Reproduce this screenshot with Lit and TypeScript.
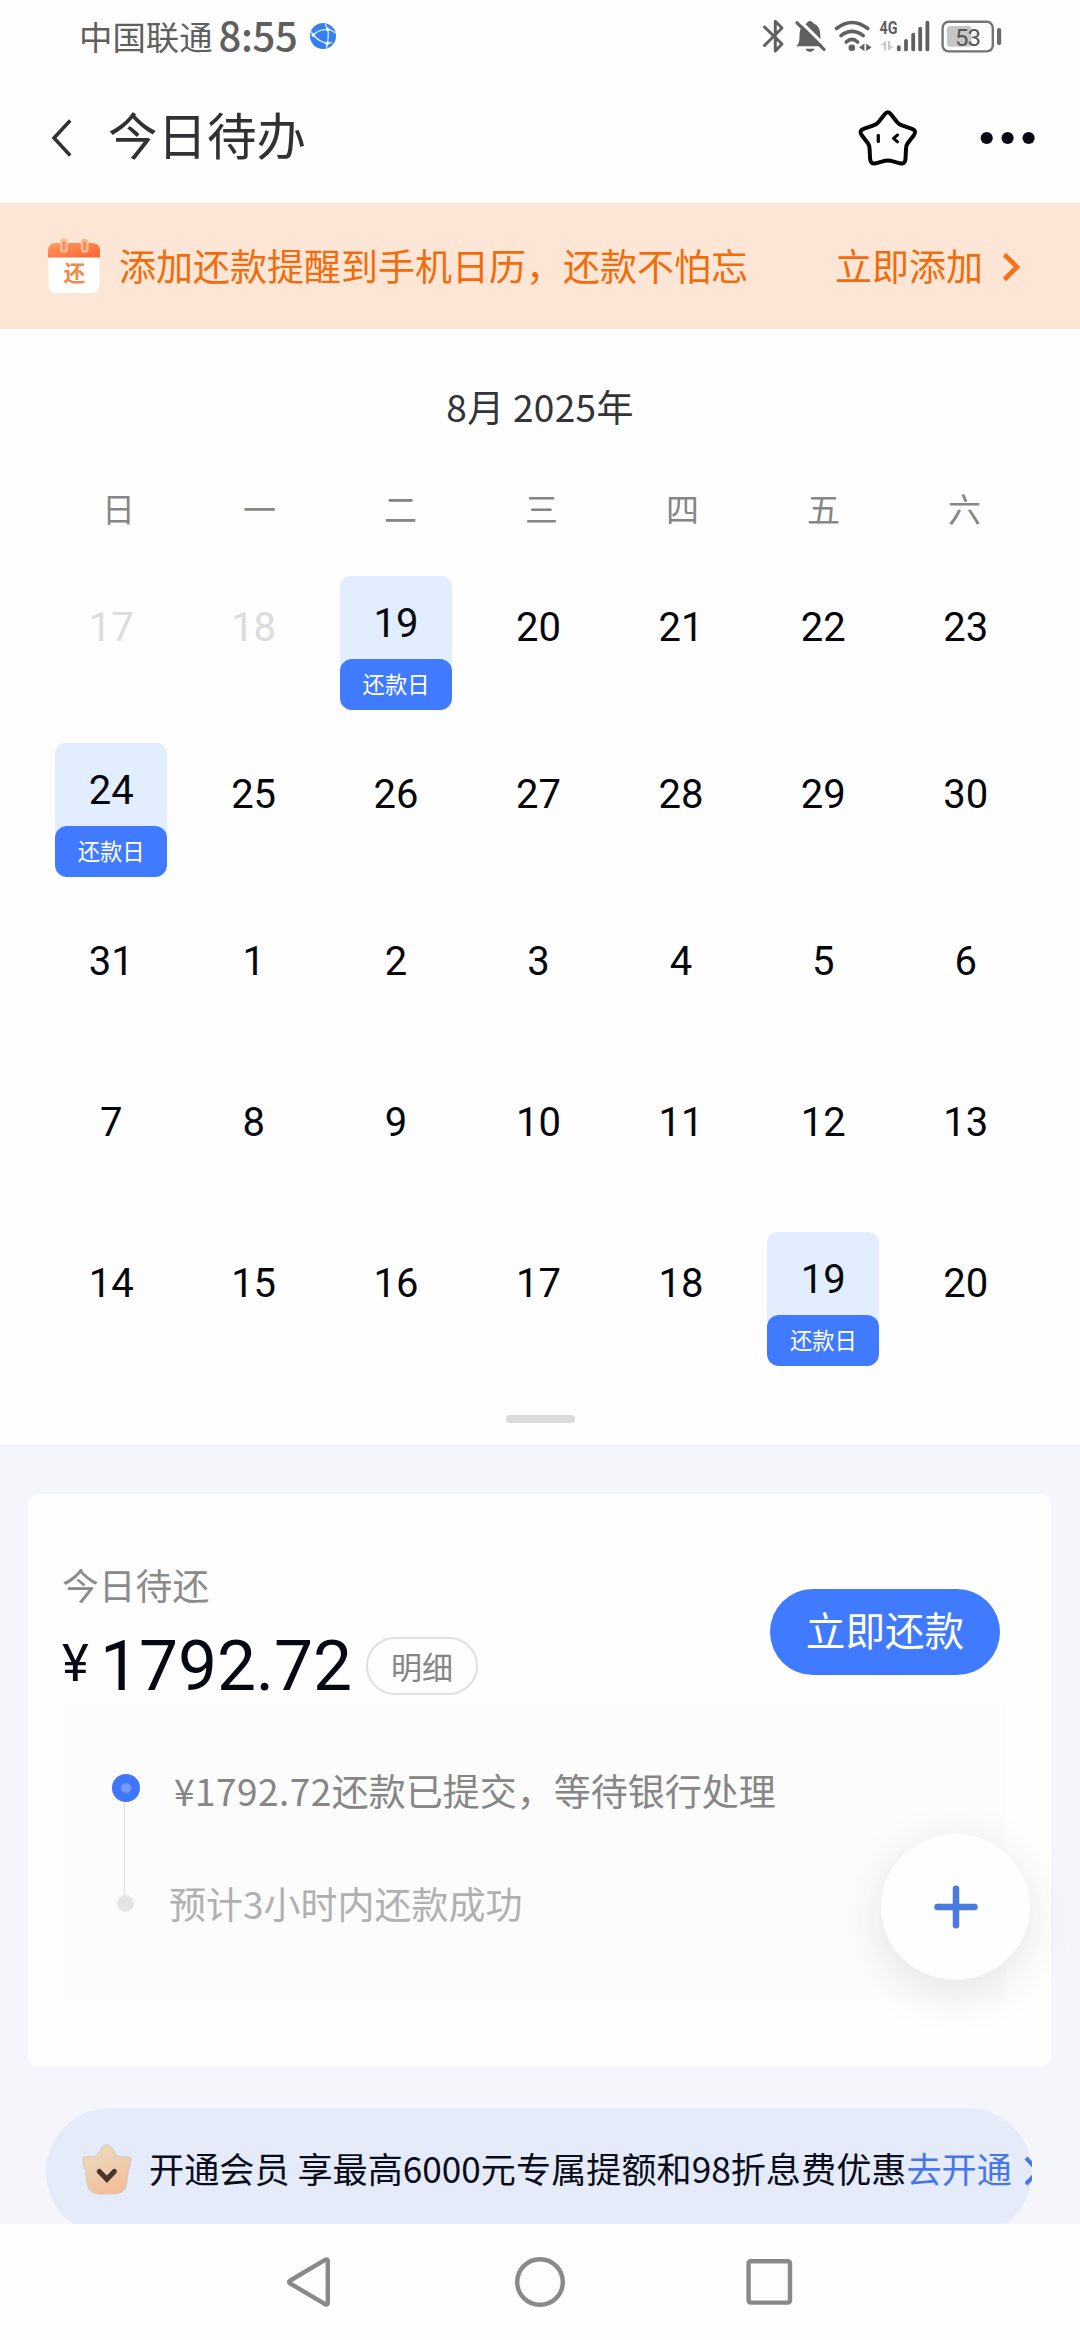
import { LitElement, html, css, svg } from "lit";
import { customElement, property } from "lit/decorators.js";
import { classMap } from "lit/directives/class-map.js";

interface Day {
  n: number;
  muted?: boolean;
  due?: boolean;
}

const WEEKDAYS = ["日", "一", "二", "三", "四", "五", "六"];

const WEEKS: Day[][] = [
  [{ n: 17, muted: true }, { n: 18, muted: true }, { n: 19, due: true }, { n: 20 }, { n: 21 }, { n: 22 }, { n: 23 }],
  [{ n: 24, due: true }, { n: 25 }, { n: 26 }, { n: 27 }, { n: 28 }, { n: 29 }, { n: 30 }],
  [{ n: 31 }, { n: 1 }, { n: 2 }, { n: 3 }, { n: 4 }, { n: 5 }, { n: 6 }],
  [{ n: 7 }, { n: 8 }, { n: 9 }, { n: 10 }, { n: 11 }, { n: 12 }, { n: 13 }],
  [{ n: 14 }, { n: 15 }, { n: 16 }, { n: 17 }, { n: 18 }, { n: 19, due: true }, { n: 20 }],
];

@customElement("status-bar")
class StatusBar extends LitElement {
  static styles = css`
    :host {
      display: flex;
      align-items: center;
      height: 72px;
      padding: 0 76px 0 79px;
      box-sizing: border-box;
      color: #5f5f5f;
      font-family: "Noto Sans CJK SC", sans-serif;
      background: #fefefe;
    }
    .carrier {
      font-size: 33.4px;
      line-height: 40px;
      margin-bottom: 1px;
    }
    .time {
      font-size: 40px;
      font-weight: 500;
      line-height: 40px;
      letter-spacing: -0.4px;
      margin: 0 0 4px 6px;
    }
    .globe {
      margin-left: 13px;
    }
    .icons {
      margin-left: auto;
    }
    svg {
      display: block;
    }
  `;

  render() {
    return html`
      <span class="carrier">中国联通</span>
      <span class="time">8:55</span>
      <svg class="globe" width="26" height="26" viewBox="0 0 26 26">
        <circle cx="13" cy="13" r="13" fill="#3580ee" />
        <g fill="none" stroke="#d6e8ff" stroke-width="1.3">
          <path d="M3.4 12 C6 8.500 11 6.500 17.700 6.300 C21 6.500 23 8 25 10" />
          <path d="M15 .5 L17.700 6.300 C18.800 11 18.600 16 16.500 25" />
          <path d="M1 8.500 L3.400 12 C7 16.500 11 19 17.200 20.300 L22 19.500" />
        </g>
        <circle cx="17.7" cy="6.3" r="1.9" fill="#eaf4ff" />
        <circle cx="3.4" cy="12" r="1.9" fill="#eaf4ff" />
        <circle cx="17.2" cy="20.3" r="1.9" fill="#eaf4ff" />
      </svg>
      <svg class="icons" width="244" height="72" viewBox="760 0 244 72">
        <path d="M764.5 27 L782 44 L775.3 51 V21.3 L782 28 L764.5 45.5" fill="none" stroke="#606060" stroke-width="3" stroke-linejoin="round" stroke-linecap="round" />
        <path d="M796 46.3 C799 44 799.5 41 799.5 36 C799.5 29 802 25 806.5 23.5 C807.5 20 812.5 20 813.5 23.5 C818 25 820.3 29 820.3 36 C820.3 41 821 44 823.5 46.3 Z" fill="#606060" />
        <path d="M805.5 48.8 H814.5 C813.5 52.8 806.5 52.8 805.5 48.8Z" fill="#606060" />
        <path d="M799 19.8 L828 48.8" stroke="#fefefe" stroke-width="3.2" />
        <path d="M797 22.8 L824 49.3" stroke="#606060" stroke-width="3.2" stroke-linecap="round" />
        <g fill="none" stroke="#606060" stroke-width="3.6" stroke-linecap="round">
          <path d="M836.5 28.5 Q852 16.5 867.8 28.5" />
          <path d="M841 35.6 Q852 27.3 863.2 35.6" />
          <path d="M846.3 42 Q852 36.8 857.6 42" />
        </g>
        <circle cx="851.8" cy="47.8" r="3.3" fill="#606060" />
        <path d="M864.4 43.5 V51 L859 47.4Z M866.2 43.5 V51 L871.5 47.4Z" fill="#606060" />
        <text x="879.5" y="34" font-family="Roboto, sans-serif" font-size="18.5" font-weight="700" textLength="18" lengthAdjust="spacingAndGlyphs" fill="#606060">4G</text>
        <path d="M886.2 40.8 V50.5 H884 V45.2 H880.3Z M888 50.8 V41 H890.2 V46.3 H894Z" fill="#c9c9c9" />
        <g stroke="#606060" stroke-width="3.8" stroke-linecap="round">
          <path d="M898.8 47.2V49.4 M906 40.8V49.4 M913.2 34.6V49.4 M920.2 28.6V49.4 M927.4 22.6V49.4" />
        </g>
        <rect x="942.6" y="21.8" width="50.2" height="29.6" rx="6" fill="none" stroke="#747474" stroke-width="2.4" />
        <rect x="947" y="26" width="24.5" height="20.8" rx="3" fill="#c6c6c6" />
        <text x="967.5" y="46" text-anchor="middle" font-family="Roboto, sans-serif" font-size="24" letter-spacing="-1" fill="#555">53</text>
        <rect x="997" y="28" width="4.2" height="17" rx="1.8" fill="#6c6c6c" />
      </svg>
    `;
  }
}

@customElement("title-bar")
class TitleBar extends LitElement {
  static styles = css`
    :host {
      display: flex;
      align-items: center;
      height: 131px;
      padding: 0 44px 0 50px;
      box-sizing: border-box;
      background: #fefefe;
      font-family: "Noto Sans CJK SC", sans-serif;
    }
    .title {
      margin: 0 0 7px 34px;
      font-size: 49.5px;
      font-weight: 400;
      line-height: 60px;
      color: #303134;
    }
    .star {
      margin-left: auto;
    }
    .more {
      margin-left: 59px;
    }
    svg {
      display: block;
    }
  `;

  render() {
    return html`
      <svg width="24" height="40" viewBox="0 0 24 40">
        <path d="M20.2 2.5 L4 20 L20.2 37.5" fill="none" stroke="#303134" stroke-width="3.5" />
      </svg>
      <h1 class="title">今日待办</h1>
      <svg class="star" width="64" height="60" viewBox="0 0 64 60">
        <g fill="none" stroke="#050508" stroke-width="4" stroke-linecap="round" stroke-linejoin="round">
          <path
            d="M28.5 6.5 Q31.8 2 35.1 6.5 L41 14 Q43 16.5 46 17.3 L56 20.8 Q61 22.8 58 27 L51.5 35.5 Q50 37.5 50 41 L49.5 51 Q49 56.5 44 55.3 L37 53.3 Q31.8 51.6 26.6 53.3 L19.6 55.3 Q14.6 56.5 14.1 51 L13.6 41 Q13.6 37.5 12.1 35.5 L5.6 27 Q2.6 22.8 7.6 20.8 L17.6 17.3 Q20.6 16.5 22.6 14Z"
          />
          <path d="M22.3 27.3V33.5" stroke-width="3.2" />
          <path d="M41.5 27L37.5 30.4L41.5 33.8" stroke-width="3" />
        </g>
      </svg>
      <svg class="more" width="57" height="14" viewBox="0 0 57 14">
        <g fill="#090915">
          <circle cx="7.7" cy="7" r="6.1" />
          <circle cx="28.6" cy="7" r="6.1" />
          <circle cx="49.6" cy="7" r="6.1" />
        </g>
      </svg>
    `;
  }
}

@customElement("reminder-banner")
class ReminderBanner extends LitElement {
  static styles = css`
    :host {
      display: flex;
      align-items: center;
      height: 126px;
      padding: 0 58px 0 48px;
      box-sizing: border-box;
      background: #fee6d6;
      color: #f26c0c;
      font-family: "Noto Sans CJK SC", sans-serif;
      font-size: 37px;
      line-height: 48px;
      white-space: nowrap;
    }
    .message {
      margin: 0 0 3px 19px;
    }
    .action {
      margin: 0 0 3px auto;
    }
    .arrow {
      margin-left: 18px;
      margin-top: 2px;
    }
    svg {
      display: block;
    }
  `;

  render() {
    return html`
      <svg width="52" height="56" viewBox="0 0 52 56">
        <defs>
          <linearGradient id="top" x1="0" y1="0" x2="1" y2="1">
            <stop offset="0" stop-color="#fd9a63" />
            <stop offset="1" stop-color="#fb6430" />
          </linearGradient>
        </defs>
        <rect x="0.5" y="5" width="51" height="50" rx="8" fill="#fff" />
        <path d="M0 19.5V13Q0 5 8 5H44Q52 5 52 13V19.5Z" fill="url(#top)" />
        <g fill="#fb8a55" stroke="#fdbd94" stroke-width="2.4">
          <rect x="13.2" y="1.8" width="5.4" height="12" rx="2.7" />
          <rect x="34" y="1.8" width="5.4" height="12" rx="2.7" />
        </g>
        <text x="26.5" y="42.8" text-anchor="middle" font-family="Noto Sans CJK SC, sans-serif" font-size="21.5" font-weight="700" fill="#f08a45">还</text>
      </svg>
      <span class="message">添加还款提醒到手机日历，还款不怕忘</span>
      <span class="action">立即添加</span>
      <svg class="arrow" width="21" height="32" viewBox="0 0 21 32">
        <path d="M3.5 3.5L16 16L3.5 28.5" fill="none" stroke="#f9701b" stroke-width="4.6" />
      </svg>
    `;
  }
}

@customElement("due-calendar")
class DueCalendar extends LitElement {
  @property({ attribute: false }) weeks: Day[][] = [];

  static styles = css`
    :host {
      display: flex;
      flex-direction: column;
      height: 1117px;
      padding-top: 47px;
      box-sizing: border-box;
      background: #fefefe;
      border-bottom: 1px solid #ececee;
      font-family: "Noto Sans CJK SC", sans-serif;
    }
    .month {
      font-size: 37px;
      line-height: 60px;
      letter-spacing: 0.3px;
      text-align: center;
      color: #333437;
    }
    .weekdays {
      display: grid;
      grid-template-columns: repeat(7, 1fr);
      margin: 52px 45px 0 48px;
      font-size: 33px;
      line-height: 40px;
      text-align: center;
      color: #868686;
    }
    .weeks {
      display: flex;
      flex-direction: column;
      gap: 33px;
      margin: 48px 43px 0 40px;
    }
    .week {
      display: grid;
      grid-template-columns: repeat(7, 1fr);
      justify-items: center;
      min-height: 128px;
    }
    .day {
      width: 112px;
      text-align: center;
    }
    .num {
      display: block;
      font-family: Roboto, sans-serif;
      font-size: 40px;
      line-height: 103px;
      color: #06070c;
    }
    .muted .num {
      color: #dcdcdc;
    }
    .due .num {
      height: 93px;
      line-height: 95px;
      border-radius: 11px 11px 0 0;
      background: #e2eefe;
    }
    .tag {
      display: block;
      height: 51px;
      margin-top: -10px;
      border-radius: 12px;
      background: #407aff;
      color: #fff;
      font-size: 22.3px;
      line-height: 48px;
    }
    .handle {
      width: 69px;
      height: 8px;
      margin: 49px auto 0;
      border-radius: 4px;
      background: #dadada;
    }
  `;

  render() {
    return html`
      <div class="month">8月 2025年</div>
      <div class="weekdays">${WEEKDAYS.map((w) => html`<span>${w}</span>`)}</div>
      <div class="weeks">
        ${this.weeks.map(
          (week) => html`
            <div class="week">
              ${week.map(
                (d) => html`
                  <div class=${classMap({ day: true, muted: !!d.muted, due: !!d.due })}>
                    <span class="num">${d.n}</span>
                    ${d.due ? html`<span class="tag">还款日</span>` : null}
                  </div>
                `
              )}
            </div>
          `
        )}
      </div>
      <div class="handle"></div>
    `;
  }
}

@customElement("repay-card")
class RepayCard extends LitElement {
  static styles = css`
    :host {
      display: block;
      height: 573px;
      padding-top: 70px;
      box-sizing: border-box;
      border-radius: 10px;
      background: #fefefe;
      font-family: "Noto Sans CJK SC", sans-serif;
    }
    .summary {
      display: flex;
      justify-content: space-between;
      height: 140px;
      padding: 0 51px 0 34px;
    }
    .label {
      font-size: 36.8px;
      line-height: 40px;
      color: #8a8a8a;
    }
    .amount {
      display: flex;
      align-items: center;
      height: 74px;
      margin-top: 26px;
      font-family: Roboto, sans-serif;
      color: #060914;
    }
    .yen {
      width: 38px;
      margin-bottom: 6px;
      font-size: 51px;
      line-height: 60px;
    }
    .value {
      width: 254px;
      font-size: 69.5px;
      line-height: 74px;
      letter-spacing: -0.1px;
    }
    .detail {
      width: 112px;
      height: 58px;
      margin: 0 0 3px 12px;
      box-sizing: border-box;
      border: 2px solid #e0e0e1;
      border-radius: 29px;
      text-align: center;
      font-family: "Noto Sans CJK SC", sans-serif;
      font-size: 31px;
      line-height: 53px;
      color: #858585;
    }
    .pay {
      width: 230px;
      height: 86px;
      margin-top: 25px;
      border: 0;
      padding: 0 0 6px;
      border-radius: 43px;
      background: #407bff;
      color: #fff;
      font-family: inherit;
      font-size: 39.6px;
      line-height: 60px;
    }
    .progress {
      display: flex;
      height: 296px;
      margin: 0 45px 0 36px;
      padding-left: 48px;
      box-sizing: border-box;
      background: #fcfcfc;
    }
    .rail {
      width: 28px;
      padding-top: 70px;
    }
    .now {
      display: flex;
      align-items: center;
      justify-content: center;
      width: 28px;
      height: 28px;
      border-radius: 50%;
      background: #3f76fb;
    }
    .core {
      width: 10px;
      height: 10px;
      border-radius: 50%;
      background: #759afd;
    }
    .line {
      width: 1px;
      height: 93px;
      margin-left: 12px;
      background: #dededf;
    }
    .next {
      width: 17px;
      height: 17px;
      margin-left: 5px;
      border-radius: 50%;
      background: #e5e5e7;
    }
    .steps {
      margin-left: 29px;
      font-size: 37px;
      line-height: 40px;
      white-space: nowrap;
    }
    .first {
      margin: 66px 0 0 5px;
      color: #868686;
    }
    .money {
      letter-spacing: 0.45px;
    }
    .second {
      margin-top: 73px;
      color: #b0b0b0;
    }
  `;

  render() {
    return html`
      <div class="summary">
        <div>
          <div class="label">今日待还</div>
          <div class="amount">
            <span class="yen">¥</span>
            <span class="value">1792.72</span>
            <span class="detail">明细</span>
          </div>
        </div>
        <button class="pay">立即还款</button>
      </div>
      <div class="progress">
        <div class="rail">
          <div class="now"><div class="core"></div></div>
          <div class="line"></div>
          <div class="next"></div>
        </div>
        <div class="steps">
          <div class="first"><span class="money">¥1792.72</span>还款已提交，等待银行处理</div>
          <div class="second">预计3小时内还款成功</div>
        </div>
      </div>
    `;
  }
}

@customElement("member-offer")
class MemberOffer extends LitElement {
  static styles = css`
    :host {
      display: block;
      overflow: hidden;
    }
    .pill {
      display: flex;
      align-items: center;
      height: 128px;
      padding-left: 36px;
      border-radius: 64px;
      background: #e6ebf9;
      font-family: "Noto Sans CJK SC", sans-serif;
      font-size: 35.15px;
      line-height: 48px;
      white-space: nowrap;
      color: #0a0d1a;
    }
    .badge {
      margin-bottom: 6px;
    }
    .text {
      margin: 0 0 8px 17px;
    }
    .go {
      margin-bottom: 8px;
      color: #4676ee;
    }
    .arrow {
      margin: 0 0 2px 11px;
    }
    svg {
      display: block;
      flex: none;
    }
  `;

  render() {
    return html`
      <div class="pill">
        <svg class="badge" width="50" height="52" viewBox="0 0 50 52">
          <defs>
            <linearGradient id="gold" x1="0.2" y1="0" x2="0.7" y2="1">
              <stop offset="0" stop-color="#ecdab9" />
              <stop offset="0.5" stop-color="#eecdb0" />
              <stop offset="1" stop-color="#f6bb98" />
            </linearGradient>
          </defs>
          <path
            d="M21 3.5Q24.8 -.5 28.6 3.5L33.5 10.5Q35.5 13.8 39 13.8H46.5Q49.6 13.8 49 17L47.8 24Q46 27 45.8 31L44.8 40Q43.5 51 31 51H18.6Q6.5 51 5 40L4 31Q3.8 27 2 24L.8 17Q.2 13.8 3.3 13.8H10.6Q14 13.8 16 10.5Z"
            fill="url(#gold)"
            stroke="#cfc2b2"
            stroke-width=".8"
          />
          <path d="M17.3 28.5L24.9 36.3L32.3 28.5" fill="none" stroke="#4c342c" stroke-width="5.2" stroke-linecap="round" />
        </svg>
        <span class="text">开通会员 享最高6000元专属提额和98折息费优惠</span>
        <span class="go">去开通</span>
        <svg class="arrow" width="20" height="32" viewBox="0 0 20 32">
          <path d="M3 3L15.5 16L3 29" fill="none" stroke="#4676ee" stroke-width="4" />
        </svg>
      </div>
    `;
  }
}

@customElement("nav-keys")
class NavKeys extends LitElement {
  static styles = css`
    :host {
      display: flex;
      align-items: center;
      height: 116px;
      padding: 0 286px;
      box-sizing: border-box;
      justify-content: space-between;
      background: #fcfdfc;
    }
    svg {
      display: block;
    }
  `;

  private key(shape: unknown, width: number) {
    return html`<svg width=${width} height="52" viewBox="0 0 ${width} 52">
      <g fill="none" stroke="#888a89" stroke-width="4.4" stroke-linejoin="round">${shape}</g>
    </svg>`;
  }

  render() {
    return html`
      ${this.key(svg`<path d="M4.2 24.5L39.5 3.6Q41.8 2.8 41.8 5V47Q41.8 49.2 39.5 48.4L4.2 27.500Q1.8 26 4.2 24.5Z" />`, 46)}
      ${this.key(svg`<circle cx="27" cy="26" r="22.8" />`, 52)}
      ${this.key(svg`<rect x="2.6" y="5.2" width="41.4" height="41.4" rx="2" />`, 48)}
    `;
  }
}

@customElement("app-root")
class AppRoot extends LitElement {
  static styles = css`
    :host {
      display: flex;
      flex-direction: column;
      width: 1080px;
      height: 2340px;
      overflow: hidden;
      background: #fefefe;
    }
    .feed {
      position: relative;
      height: 778px;
      overflow: hidden;
      background: #f5f6fb;
    }
    .card {
      margin: 48px 29px 0 28px;
    }
    .offer {
      margin: 41px 48px 0 46px;
    }
    .add {
      position: absolute;
      left: 881px;
      top: 388px;
      display: flex;
      align-items: center;
      justify-content: center;
      width: 149px;
      height: 146px;
      padding: 0;
      border: 0;
      border-radius: 50%;
      background: #fefefe;
      box-shadow: 0 12px 48px rgba(40, 50, 50, 0.12);
    }
  `;

  render() {
    return html`
      <status-bar></status-bar>
      <title-bar></title-bar>
      <reminder-banner></reminder-banner>
      <due-calendar .weeks=${WEEKS}></due-calendar>
      <main class="feed">
        <repay-card class="card"></repay-card>
        <member-offer class="offer"></member-offer>
        <button class="add" aria-label="添加">
          <svg width="44" height="44" viewBox="0 0 44 44">
            <path d="M22 3.8V40.2M3.5 22H40.5" stroke="#4a7ae0" stroke-width="6.5" stroke-linecap="round" />
          </svg>
        </button>
      </main>
      <nav-keys></nav-keys>
    `;
  }
}
